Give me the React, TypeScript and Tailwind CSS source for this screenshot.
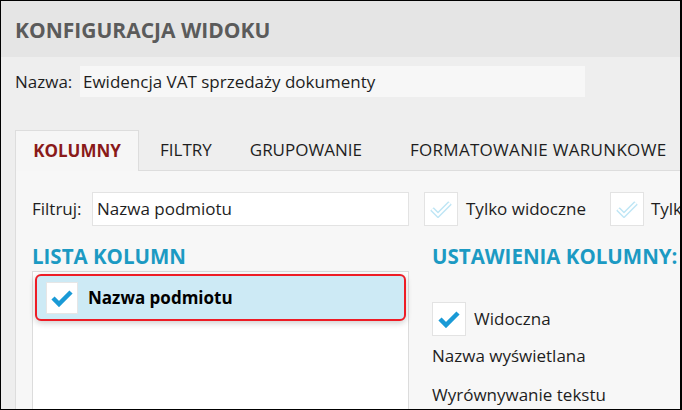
import React from "react";

const font = { fontFamily: '"Open Sans", "Noto Sans", sans-serif' };

function Check({ light }: { light?: boolean }) {
  if (light) {
    return (
      <svg width="22" height="18" viewBox="0 0 22 18">
        <path d="M2 9 L8 15 L20 3" fill="none" stroke="#bfe6f5" strokeWidth="5" strokeLinejoin="miter" />
        <path d="M2 9 L8 15 L20 3" fill="none" stroke="#ffffff" strokeWidth="2" strokeLinejoin="miter" />
      </svg>
    );
  }
  return (
    <svg width="22" height="18" viewBox="0 0 22 18">
      <path d="M2 9 L8 15 L20 3" fill="none" stroke="#1a9ad6" strokeWidth="4.5" strokeLinejoin="miter" />
    </svg>
  );
}

export default function App() {
  return (
    <div className="w-[682px] h-[410px] bg-black p-[1px] pr-[2px] pb-[1px] overflow-hidden" style={font}>
      <div className="w-full h-full bg-[#eeeeee] flex flex-col overflow-hidden">
        <div className="h-[56px] bg-[#e5e5e5] flex items-center pl-[14px] pt-[4px] shrink-0">
          <span className="text-[21px] font-bold text-[#5b5b5b]">KONFIGURACJA WIDOKU</span>
        </div>
        <div className="flex items-center pl-[14px] mt-[9px] h-[31px] shrink-0">
          <span className="text-[17px] text-[#1e1e1e] w-[65px]">Nazwa:</span>
          <div className="w-[505px] h-[31px] bg-[#f7f7f7] flex items-center pl-[3px] text-[17px] text-[#1e1e1e]">
            Ewidencja VAT sprzedaży dokumenty
          </div>
        </div>
        <div className="flex items-end pl-[14px] mt-[33px] h-[41px] shrink-0">
          <div className="h-[41px] w-[124px] bg-[#f6f6f6] border border-b-0 border-[#dddddd] flex items-center justify-center text-[17px] font-bold text-[#8a1a1a]">
            KOLUMNY
          </div>
          <div className="flex-1 h-[41px] border-b border-[#dddddd] flex items-center text-[17px] text-[#1e1e1e] whitespace-nowrap">
            <span className="ml-[21px]">FILTRY</span>
            <span className="ml-[38px]">GRUPOWANIE</span>
            <span className="ml-[48px] tracking-[0.3px]">FORMATOWANIE WARUNKOWE</span>
          </div>
        </div>
        <div className="flex-1 ml-[14px] bg-[#f7f7f7] border-l border-[#dddddd] pl-[16px] pt-[21px]">
          <div className="flex items-center h-[34px] whitespace-nowrap">
            <span className="text-[17px] text-[#1e1e1e] w-[60px] shrink-0">Filtruj:</span>
            <div className="w-[317px] h-[34px] bg-white border border-[#e3e3e3] flex items-center pl-[4px] text-[17px] text-[#1e1e1e] shrink-0">
              Nazwa podmiotu
            </div>
            <div className="ml-[15px] w-[34px] h-[34px] bg-white border border-[#e3e3e3] flex items-center justify-center shrink-0">
              <Check light />
            </div>
            <span className="ml-[8px] text-[17px] text-[#1e1e1e]">Tylko widoczne</span>
            <div className="ml-[24px] w-[34px] h-[34px] bg-white border border-[#e3e3e3] flex items-center justify-center shrink-0">
              <Check light />
            </div>
            <span className="ml-[7px] text-[17px] text-[#1e1e1e]">Tylko</span>
          </div>
          <div className="flex mt-[17px]">
            <div className="w-[377px] flex flex-col shrink-0">
              <div className="text-[20.5px] font-bold text-[#1c9ac3] leading-[26px]">LISTA KOLUMN</div>
              <div className="mt-[2px] h-[200px] bg-white border border-[#dcdcdc] p-[2px]">
                <div className="h-[47px] w-[371px] rounded-[6px] border-2 border-solid border-[#ee1c25] bg-[#cdeaf5] shadow-[0_2px_6px_rgba(0,0,0,0.2)] flex items-center pl-[9px]">
                  <div className="w-[32px] h-[32px] bg-white border border-[#e6e6e6] flex items-center justify-center">
                    <Check />
                  </div>
                  <span className="ml-[10px] text-[17px] font-bold text-black">Nazwa podmiotu</span>
                </div>
              </div>
            </div>
            <div className="ml-[23px] flex flex-col whitespace-nowrap">
              <div className="text-[20.5px] font-bold text-[#1c9ac3] leading-[26px]">USTAWIENIA KOLUMNY:</div>
              <div className="flex items-center mt-[33px]">
                <div className="w-[34px] h-[34px] bg-white border border-[#e3e3e3] flex items-center justify-center">
                  <Check />
                </div>
                <span className="ml-[8px] text-[17px] text-[#1e1e1e]">Widoczna</span>
              </div>
              <div className="mt-[8px] text-[17px] text-[#1e1e1e] leading-[24px]">Nazwa wyświetlana</div>
              <div className="mt-[15px] text-[17px] text-[#1e1e1e] leading-[24px]">Wyrównywanie tekstu</div>
            </div>
          </div>
        </div>
      </div>
    </div>
  );
}
